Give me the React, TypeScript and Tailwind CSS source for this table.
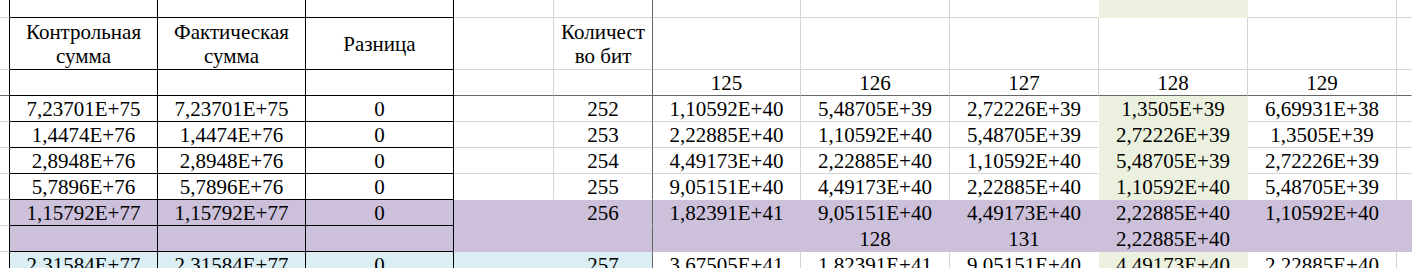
type Fill = "w" | "p" | "b" | "g";

const rows: string[][] = [
  ["", "", "", "", "", "", "", "", "", "", "", ""],
  ["", "Контрольная\nсумма", "Фактическая\nсумма", "Разница", "", "Количест\nво бит", "", "", "", "", "", ""],
  ["", "", "", "", "", "", "125", "126", "127", "128", "129", ""],
  ["", "7,23701E+75", "7,23701E+75", "0", "", "252", "1,10592E+40", "5,48705E+39", "2,72226E+39", "1,3505E+39", "6,69931E+38", ""],
  ["", "1,4474E+76", "1,4474E+76", "0", "", "253", "2,22885E+40", "1,10592E+40", "5,48705E+39", "2,72226E+39", "1,3505E+39", ""],
  ["", "2,8948E+76", "2,8948E+76", "0", "", "254", "4,49173E+40", "2,22885E+40", "1,10592E+40", "5,48705E+39", "2,72226E+39", ""],
  ["", "5,7896E+76", "5,7896E+76", "0", "", "255", "9,05151E+40", "4,49173E+40", "2,22885E+40", "1,10592E+40", "5,48705E+39", ""],
  ["", "1,15792E+77", "1,15792E+77", "0", "", "256", "1,82391E+41", "9,05151E+40", "4,49173E+40", "2,22885E+40", "1,10592E+40", ""],
  ["", "", "", "", "", "", "", "128", "131", "2,22885E+40", "", ""],
  ["", "2,31584E+77", "2,31584E+77", "0", "", "257", "3,67505E+41", "1,82391E+41", "9,05151E+40", "4,49173E+40", "2,22885E+40", ""],
];

const bg: Record<Fill, string> = {
  w: "bg-white",
  p: "bg-[#ccc0da]",
  b: "bg-[#daeef3]",
  g: "bg-[#ebf1de]",
};

// which fill a cell has (excel-ish colour bands)
const fillOf = (r: number, c: number): Fill => {
  if (r < 0 || r >= rows.length || c < 0 || c > 11) return "w";
  if ((r === 7 || r === 8) && c >= 1) return "p";
  if (r === 9 && c >= 1 && c <= 5) return "b";
  if (c === 9 && (r === 0 || (r >= 3 && r <= 6) || r === 9)) return "g";
  return "w";
};

const isTable = (c: number) => c >= 1 && c <= 3;

const rightBorder = (r: number, c: number) => {
  if (c <= 3) return "border-r-black";
  if (c === 5) return "border-r-[#666666]";
  if (c === 11) return "border-r-transparent";
  if (fillOf(r, c) !== "w" || fillOf(r, c + 1) !== "w") return "border-r-transparent";
  return "border-r-[#d4d4d4]";
};

const bottomBorder = (r: number, c: number) => {
  if (isTable(c)) return "border-b-black";
  if (r === 2) return "border-b-[#666666]";
  if (fillOf(r, c) !== "w" || fillOf(r + 1, c) !== "w") return "border-b-transparent";
  return "border-b-[#d4d4d4]";
};

const Cell = ({ text, r, c }: { text: string; r: number; c: number }) => {
  const lines = text.split("\n");
  const align =
    r === 1
      ? "flex flex-col items-center justify-center pt-[1px] text-center"
      : "flex items-end justify-center";
  return (
    <div
      className={`${align} border-r border-b ${rightBorder(r, c)} ${bottomBorder(r, c)} ${bg[fillOf(r, c)]} whitespace-nowrap`}
    >
      {lines.map((l, i) => (
        <span key={i} className="block">
          {l}
        </span>
      ))}
    </div>
  );
};

export default function App() {
  return (
    <div className="w-[1412px] h-[268px] overflow-hidden bg-white text-black [font-family:Liberation_Serif,serif] text-[21px] leading-[24px]">
      <div className="grid grid-cols-[10px_148px_148px_148px_100px_99px_148px_149px_149px_149px_149px_15px] grid-rows-[18px_52px_26px_26px_26px_26px_26px_26px_26px_26px]">
        {rows.map((row, r) =>
          row.map((text, c) => <Cell key={`${r}-${c}`} text={text} r={r} c={c} />)
        )}
      </div>
    </div>
  );
}
